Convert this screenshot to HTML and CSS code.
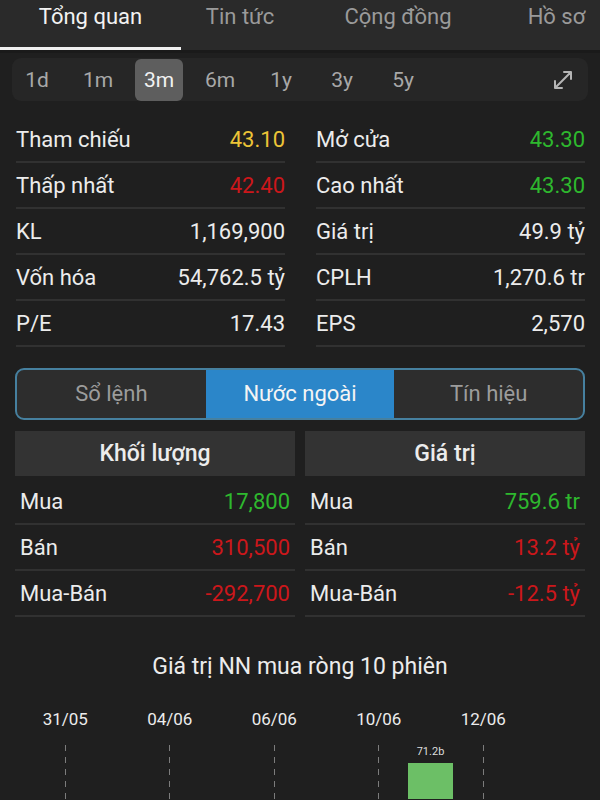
FILE: index.html
```html
<!DOCTYPE html>
<html lang="vi">
<head>
    <meta charset="UTF-8">
    <meta name="viewport" content="width=device-width, initial-scale=1.0">
    <title>Tổng quan</title>
    <link rel="stylesheet" href="styles.css">
</head>
<body>
    <!-- Onglets principaux -->
    <div class="topbar">
        <div class="tab active">Tổng quan</div>
        <div class="tab news">Tin tức</div>
        <div class="tab community">Cộng đồng</div>
        <div class="tab profile">Hồ sơ</div>
    </div>

    <!-- Periodes -->
    <div class="periods">
        <span class="period">1d</span>
        <span class="period">1m</span>
        <span class="period selected">3m</span>
        <span class="period">6m</span>
        <span class="period">1y</span>
        <span class="period">3y</span>
        <span class="period">5y</span>
        <svg class="expand" width="22" height="22" viewBox="0 0 22 22">
            <path d="M3 19 L19 3 M12 3 H19 V10 M3 12 V19 H10" fill="none" stroke="#b5b5b5" stroke-width="2" stroke-linecap="round" stroke-linejoin="round"/>
        </svg>
    </div>

    <!-- Statistiques -->
    <div class="stats">
        <div class="col">
            <div class="row"><span>Tham chiếu</span><span class="yellow">43.10</span></div>
            <div class="row"><span>Thấp nhất</span><span class="red">42.40</span></div>
            <div class="row"><span>KL</span><span>1,169,900</span></div>
            <div class="row"><span>Vốn hóa</span><span>54,762.5 tỷ</span></div>
            <div class="row"><span>P/E</span><span>17.43</span></div>
        </div>
        <div class="col">
            <div class="row"><span>Mở cửa</span><span class="green">43.30</span></div>
            <div class="row"><span>Cao nhất</span><span class="green">43.30</span></div>
            <div class="row"><span>Giá trị</span><span>49.9 tỷ</span></div>
            <div class="row"><span>CPLH</span><span>1,270.6 tr</span></div>
            <div class="row"><span>EPS</span><span>2,570</span></div>
        </div>
    </div>

    <!-- Segment -->
    <div class="segment">
        <div class="seg">Sổ lệnh</div>
        <div class="seg active">Nước ngoài</div>
        <div class="seg">Tín hiệu</div>
    </div>

    <!-- Nuoc ngoai -->
    <div class="foreign">
        <div class="fcol">
            <div class="fhead">Khối lượng</div>
            <div class="row"><span>Mua</span><span class="green">17,800</span></div>
            <div class="row"><span>Bán</span><span class="red">310,500</span></div>
            <div class="row"><span>Mua-Bán</span><span class="red">-292,700</span></div>
        </div>
        <div class="fcol">
            <div class="fhead">Giá trị</div>
            <div class="row"><span>Mua</span><span class="green">759.6 tr</span></div>
            <div class="row"><span>Bán</span><span class="red">13.2 tỷ</span></div>
            <div class="row"><span>Mua-Bán</span><span class="red">-12.5 tỷ</span></div>
        </div>
    </div>

    <!-- Graphique -->
    <div class="chart-title">Giá trị NN mua ròng 10 phiên</div>
    <div class="chart">
        <div class="day"><span class="date">31/05</span><div class="dash"></div></div>
        <div class="day"><span class="date">04/06</span><div class="dash"></div></div>
        <div class="day"><span class="date">06/06</span><div class="dash"></div></div>
        <div class="day"><span class="date">10/06</span><div class="dash"></div></div>
        <div class="day"><span class="date">12/06</span><div class="dash"></div></div>
        <div class="bar-wrap">
            <span class="bar-label">71.2b</span>
            <div class="bar"></div>
        </div>
    </div>
</body>
</html>
```

FILE: styles.css
```css
body {
    margin: 0;
    background-color: #1f1f1f;
    color: #ececec;
    font-family: Roboto, "Noto Sans", sans-serif;
    font-size: 22px;
    width: 600px;
    height: 800px;
    overflow: hidden;
}
.topbar {
    display: flex;
    height: 50px;
    background-color: #2a2a2a;
    border-bottom: 3px solid #1a1a1a;
    overflow: hidden;
}
.tab {
    flex: 0 0 auto;
    text-align: center;
    line-height: 34px;
    color: #9a9a9a;
    font-size: 22px;
    border-bottom: 3px solid transparent;
}
.tab.active {
    width: 181px;
    color: #f2f2f2;
    border-bottom-color: #f0f0f0;
}
.tab.news {
    width: 118px;
}
.tab.community {
    width: 198px;
}
.tab.profile {
    width: 87px;
    padding-left: 16px;
}
.periods {
    display: flex;
    align-items: center;
    margin: 5px 12px 0;
    height: 43px;
    background-color: #262626;
    border-radius: 9px;
    padding-left: 1px;
}
.period {
    width: 48px;
    height: 42px;
    line-height: 42px;
    text-align: center;
    margin-right: 13px;
    color: #a8a8a8;
    font-size: 21px;
    border-radius: 6px;
}
.period.selected {
    background-color: #5e5e5e;
    color: #f2f2f2;
}
.expand {
    margin-left: auto;
    margin-right: 14px;
}
.stats {
    display: flex;
    gap: 31px;
    padding: 16px 15px 0 16px;
}
.col {
    flex: 1;
}
.row {
    display: flex;
    justify-content: space-between;
    align-items: center;
    height: 44px;
    border-bottom: 2px solid #313131;
}
.yellow {
    color: #ecc437;
}
.red {
    color: #cc171b;
}
.green {
    color: #2eb82e;
}
.segment {
    display: flex;
    margin: 21px 15px 0;
    height: 48px;
    border: 2px solid #46809f;
    border-radius: 9px;
    overflow: hidden;
    background-color: #2d2d2d;
}
.seg {
    flex: 1;
    text-align: center;
    line-height: 48px;
    color: #9c9c9c;
}
.seg.active {
    background-color: #2b86c9;
    color: #f4f4f4;
}
.foreign {
    display: flex;
    gap: 10px;
    padding: 11px 15px 0;
}
.fcol {
    flex: 1;
}
.fcol .row {
    padding: 0 5px;
}
.fhead {
    height: 45px;
    line-height: 45px;
    margin-bottom: 3px;
    text-align: center;
    background-color: #333333;
    font-size: 23px;
    font-weight: 500;
}
.chart-title {
    text-align: center;
    margin-top: 36px;
    font-size: 23px;
    line-height: 28px;
}
.chart {
    position: relative;
    display: flex;
    padding: 28px 0 0 26px;
    height: 90px;
    overflow: hidden;
}
.day {
    width: 104.5px;
    display: flex;
    flex-direction: column;
    align-items: center;
    flex: 0 0 auto;
}
.date {
    width: 56px;
    text-align: center;
    font-size: 17px;
    margin-left: -26px;
    line-height: 20px;
}
.dash {
    margin-top: 16px;
    margin-left: -26px;
    width: 1px;
    height: 60px;
    background: repeating-linear-gradient(to bottom, #7c7c7c 0 6px, transparent 6px 12px);
}
.bar-wrap {
    position: absolute;
    left: 408px;
    top: 64px;
    width: 45px;
    display: flex;
    flex-direction: column;
    align-items: center;
}
.bar-label {
    font-size: 11px;
    color: #ddd;
    line-height: 14px;
}
.bar {
    margin-top: 4px;
    width: 45px;
    height: 40px;
    background-color: #6cbf66;
}
```
